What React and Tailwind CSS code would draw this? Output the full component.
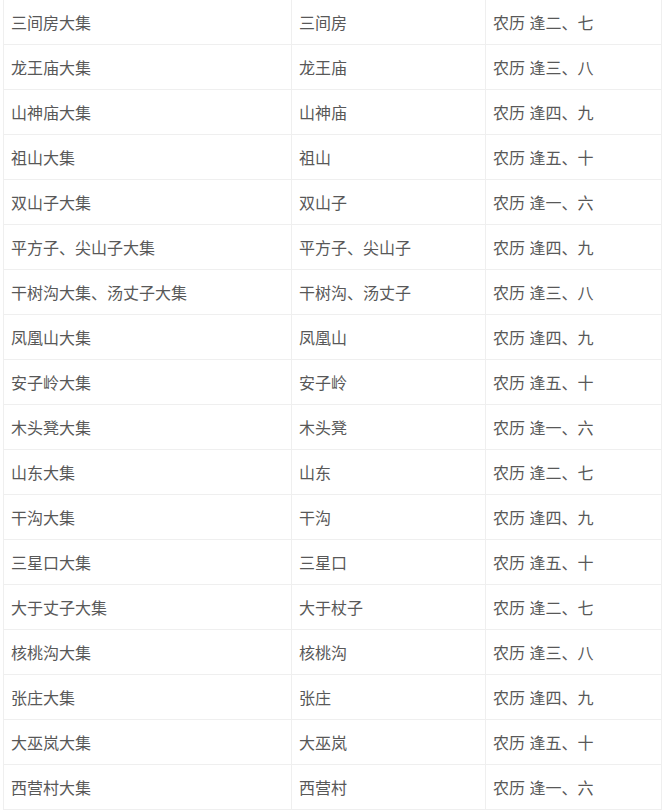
import React from 'react';

// 集市数据
const ROWS = [
  ['三间房大集', '三间房', '农历 逢二、七'],
  ['龙王庙大集', '龙王庙', '农历 逢三、八'],
  ['山神庙大集', '山神庙', '农历 逢四、九'],
  ['祖山大集', '祖山', '农历 逢五、十'],
  ['双山子大集', '双山子', '农历 逢一、六'],
  ['平方子、尖山子大集', '平方子、尖山子', '农历 逢四、九'],
  ['干树沟大集、汤丈子大集', '干树沟、汤丈子', '农历 逢三、八'],
  ['凤凰山大集', '凤凰山', '农历 逢四、九'],
  ['安子岭大集', '安子岭', '农历 逢五、十'],
  ['木头凳大集', '木头凳', '农历 逢一、六'],
  ['山东大集', '山东', '农历 逢二、七'],
  ['干沟大集', '干沟', '农历 逢四、九'],
  ['三星口大集', '三星口', '农历 逢五、十'],
  ['大于丈子大集', '大于杖子', '农历 逢二、七'],
  ['核桃沟大集', '核桃沟', '农历 逢三、八'],
  ['张庄大集', '张庄', '农历 逢四、九'],
  ['大巫岚大集', '大巫岚', '农历 逢五、十'],
  ['西营村大集', '西营村', '农历 逢一、六'],
];

export default function App() {
  return (
    <div className="w-[664px] h-[812px] overflow-hidden bg-white pl-[3px] font-['Liberation_Sans','Noto_Sans_CJK_SC',sans-serif] text-[16px] text-[#585858]">
      <table className="w-[658px] border-collapse table-fixed -mt-px">
        <colgroup>
          <col className="w-[288px]" />
          <col className="w-[194px]" />
          <col className="w-[176px]" />
        </colgroup>
        <tbody>
          {ROWS.map((r, i) => (
            <tr key={i} className="h-[45px]">
              {r.map((c, j) => (
                <td key={j} className="border border-[#efefef] pl-[7px] pr-2 pt-[4px] align-middle leading-none whitespace-nowrap">
                  {c}
                </td>
              ))}
            </tr>
          ))}
        </tbody>
      </table>
    </div>
  );
}
